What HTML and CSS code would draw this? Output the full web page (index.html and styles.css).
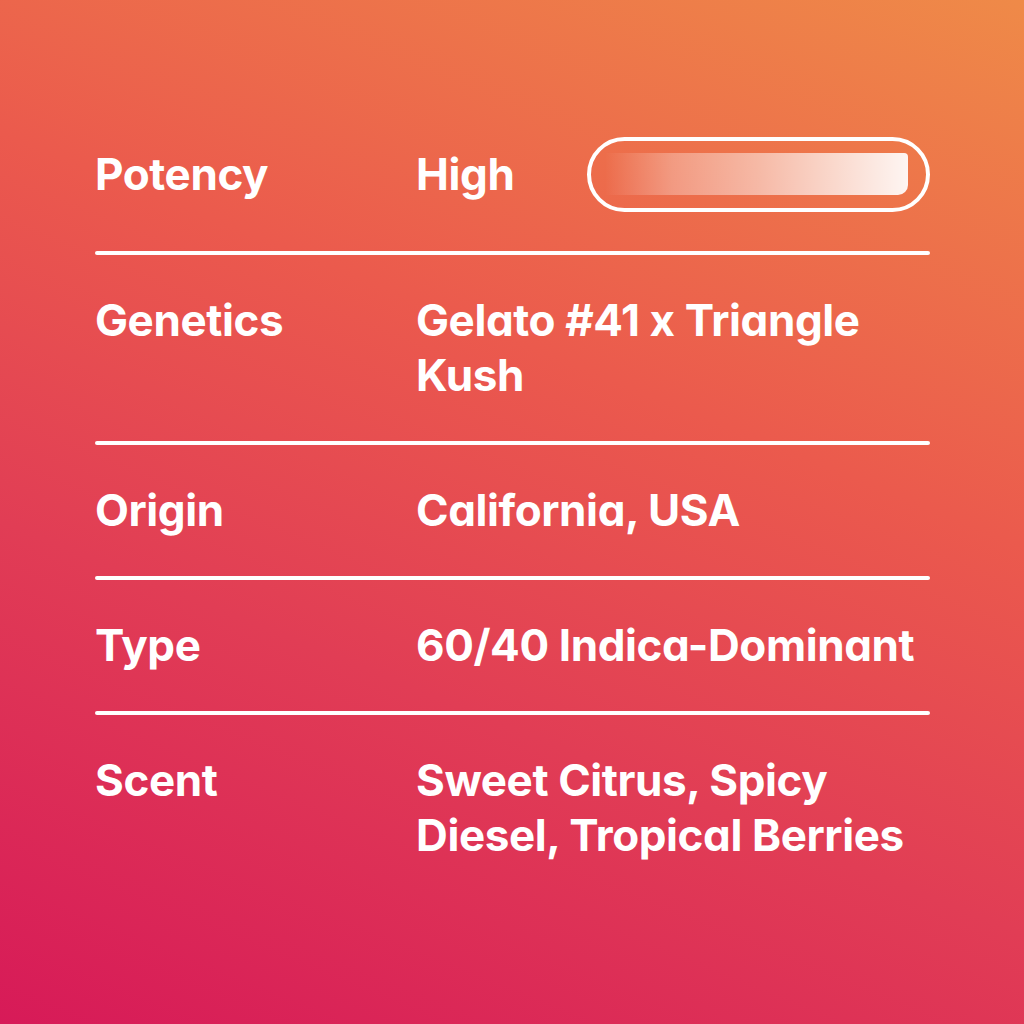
FILE: index.html
```html
<!DOCTYPE html>
<html lang="en">
<head>
<meta charset="utf-8">
<title>Strain Details</title>
<link rel="stylesheet" href="styles.css">
</head>
<body>
<main class="sheet">
  <div class="row row-first">
    <div class="label">Potency</div>
    <div class="value value-potency">
      <span>High</span>
      <div class="meter"><div class="meter-fill"></div></div>
    </div>
  </div>
  <div class="row">
    <div class="label">Genetics</div>
    <div class="value">Gelato #41 x Triangle<br>Kush</div>
  </div>
  <div class="row">
    <div class="label">Origin</div>
    <div class="value">California, USA</div>
  </div>
  <div class="row">
    <div class="label">Type</div>
    <div class="value">60/40 Indica-Dominant</div>
  </div>
  <div class="row row-last">
    <div class="label">Scent</div>
    <div class="value">Sweet Citrus, Spicy<br>Diesel, Tropical Berries</div>
  </div>
</main>
</body>
</html>
```
FILE: styles.css
```css
html, body {
  margin: 0;
  height: 100%;
}
body {
  width: 1024px;
  height: 1024px;
  overflow: hidden;
  background: linear-gradient(22deg, #d71a58 0%, #e13d55 35%, #eb5a4d 62%, #ef8a48 100%);
  font-family: "Inter", "Lato", sans-serif;
  font-feature-settings: "cv11" 1;
  color: #fff;
}
.sheet {
  width: 835px;
  margin-left: 95px;
  padding-top: 137px;
}
.row {
  position: relative;
  display: flex;
  align-items: flex-start;
  padding: 38px 0 42px;
  font-size: 44px;
  font-weight: 700;
  line-height: 55px;
  letter-spacing: -0.4px;
}
.row::after {
  content: "";
  position: absolute;
  left: 0;
  right: 0;
  bottom: 0;
  height: 4px;
  border-radius: 2px;
  background: #fff;
}
.row-first {
  padding-top: 0;
  padding-bottom: 43px;
  align-items: center;
}
.row-last::after {
  display: none;
}
.label {
  width: 321px;
  flex: none;
}
.value {
  flex: 1;
}
.value-potency {
  display: flex;
  align-items: center;
  justify-content: space-between;
}
.meter {
  box-sizing: border-box;
  width: 343px;
  height: 75px;
  border: 4px solid #fff;
  border-radius: 38px;
  padding: 12px 18px 13px 14px;
}
.meter-fill {
  height: 100%;
  border-radius: 0 4px 10px 0;
  background: linear-gradient(to right, rgba(255,255,255,0) 0%, rgba(255,255,255,0.3) 22%, rgba(255,255,255,0.5) 50%, rgba(255,255,255,0.93) 100%);
}
```
